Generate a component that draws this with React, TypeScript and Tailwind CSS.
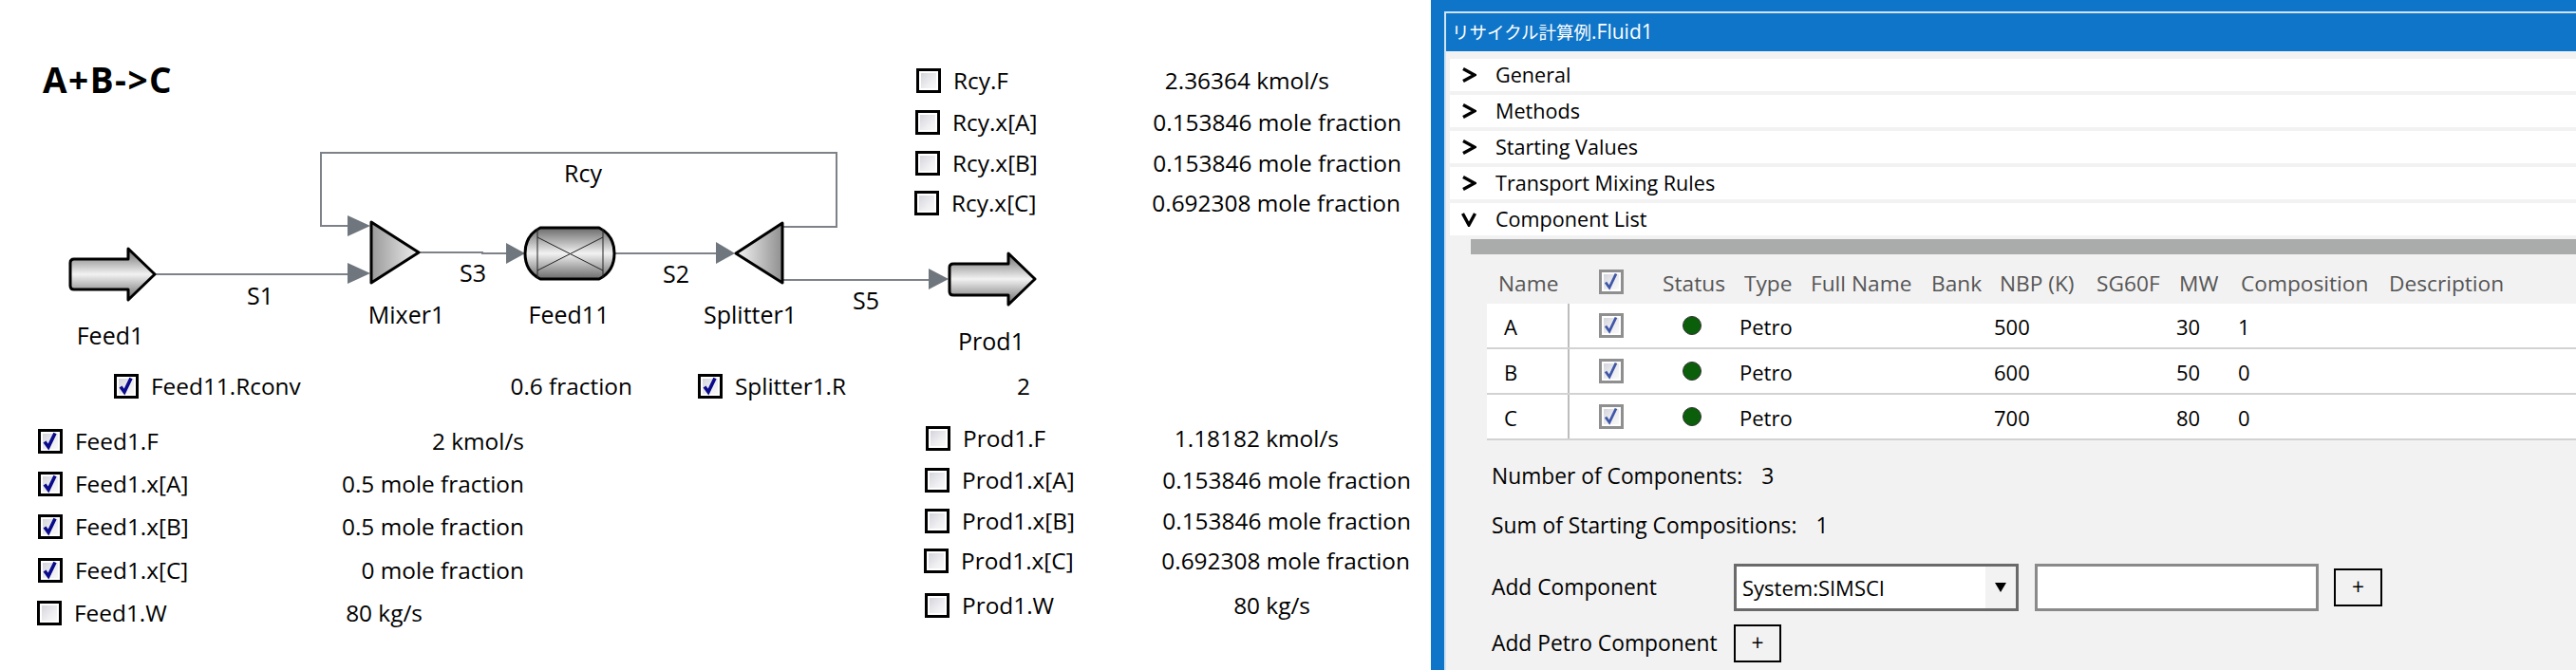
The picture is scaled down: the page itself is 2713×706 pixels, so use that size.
const FONT = "font-['Open_Sans','Noto_Sans','Noto_Sans_CJK_JP',sans-serif]";

function Check({ on, soft }: { on?: boolean; soft?: boolean }) {
  return (
    <svg width="26" height="26" viewBox="0 0 26 26" className="block shrink-0">
      <defs>
        <linearGradient id="cbFill" x1="0" y1="0" x2="1" y2="1">
          <stop offset="0" stopColor="#d4d5dc" />
          <stop offset="0.6" stopColor="#eeeef1" />
          <stop offset="1" stopColor="#f9f9fa" />
        </linearGradient>
      </defs>
      <rect x="1.5" y="1.5" width="23" height="23" fill="#fff" stroke={soft ? "#8f8f8f" : "#000"} strokeWidth="3" />
      <rect x="5" y="5" width="16" height="16" fill="url(#cbFill)" />
      {on && <path d="M7 13.5 L11 19 L18 4.5" fill="none" stroke={soft ? "#3f57a8" : "#0a0a8c"} strokeWidth={soft ? 2.8 : 3.6} />}
    </svg>
  );
}

function Var({ boxX, y, label, value, vx, on }: { boxX: number; y: number; label: string; value: string; vx: number; on?: boolean }) {
  return (
    <>
      <div className="absolute flex items-center h-[26px] -translate-y-1/2 whitespace-nowrap" style={{ left: boxX, top: y }}>
        <Check on={on} />
        <span className="ml-[13px] text-[24.4px] text-black">{label}</span>
      </div>
      <div className="absolute h-[26px] leading-[26px] -translate-y-1/2 -translate-x-full whitespace-nowrap text-[24.4px] text-black" style={{ left: vx, top: y }}>
        {value}
      </div>
    </>
  );
}

function Label({ x, y, t }: { x: number; y: number; t: string }) {
  return (
    <text x={x} y={y + 9} textAnchor="middle" fontSize="25" fill="#000">
      {t}
    </text>
  );
}

function Flowsheet() {
  const grey = "#7d8289";
  const head = "#6f767d";
  return (
    <svg width="1506" height="420" viewBox="0 0 1506 420" className="absolute left-0 top-0">
      <defs>
        <linearGradient id="vg" x1="0" y1="0" x2="0" y2="1">
          <stop offset="0" stopColor="#6a6a6a" />
          <stop offset="0.5" stopColor="#f2f2f2" />
          <stop offset="1" stopColor="#6a6a6a" />
        </linearGradient>
        <linearGradient id="hgR" x1="0" y1="0" x2="1" y2="0">
          <stop offset="0" stopColor="#999999" />
          <stop offset="1" stopColor="#efefef" />
        </linearGradient>
        <linearGradient id="hgL" x1="0" y1="0" x2="1" y2="0">
          <stop offset="0" stopColor="#f6f6f6" />
          <stop offset="1" stopColor="#8f8f8f" />
        </linearGradient>
      </defs>
      <g fill="none" stroke={grey} strokeWidth="2">
        <path d="M164 289H370" />
        <path d="M370 238H338V161H881V239H824" />
        <path d="M441 266H508V267H535" />
        <path d="M648 267H756" />
        <path d="M824 295H980" />
      </g>
      <g fill={head}>
        <path d="M366 277L390 288L366 299Z" />
        <path d="M366 227L390 238L366 249Z" />
        <path d="M533 256L553 267L533 278Z" />
        <path d="M754 255L774 267L754 278Z" />
        <path d="M978 283L999 294L978 305Z" />
      </g>
      <path d="M78 273H135V262L163 289L135 316V305H78Q74 305 74 301V277Q74 273 78 273Z" fill="url(#vg)" stroke="#000" strokeWidth="3" strokeLinejoin="round" />
      <path d="M1004 278H1062V267L1090 294L1062 321V311H1004Q1000 311 1000 307V282Q1000 278 1004 278Z" fill="url(#vg)" stroke="#000" strokeWidth="3" strokeLinejoin="round" />
      <path d="M391 234L441 266L391 298Z" fill="url(#hgR)" stroke="#000" strokeWidth="3" strokeLinejoin="round" />
      <path d="M824 235L775 267L824 298Z" fill="url(#hgL)" stroke="#000" strokeWidth="3" strokeLinejoin="round" />
      <path d="M569 240H631Q647 248 647 267Q647 286 631 294H569Q553 286 553 267Q553 248 569 240Z" fill="url(#vg)" stroke="#000" strokeWidth="3" strokeLinejoin="round" />
      <g fill="none" stroke="#222" strokeWidth="1">
        <path d="M566 241V293M635 241V293" />
        <path d="M566 250L635 285M635 250L566 285" />
      </g>
      <Label x={116} y={354} t="Feed1" />
      <Label x={274} y={312} t="S1" />
      <Label x={614} y={183} t="Rcy" />
      <Label x={428} y={332} t="Mixer1" />
      <Label x={498} y={288} t="S3" />
      <Label x={599} y={332} t="Feed11" />
      <Label x={712} y={289} t="S2" />
      <Label x={790} y={332} t="Splitter1" />
      <Label x={912} y={317} t="S5" />
      <Label x={1044} y={360} t="Prod1" />
    </svg>
  );
}

function Section({ title, open }: { title: string; open?: boolean }) {
  return (
    <div className="flex items-center h-[34px] bg-white pl-[12px]">
      <svg width="16" height="16" viewBox="0 0 16 16" className="shrink-0">
        {open ? <path d="M1.5 2L8 14L14.5 2" fill="none" stroke="#000" strokeWidth="3.4" /> : <path d="M2 1.5L14 8L2 14.5" fill="none" stroke="#000" strokeWidth="3.4" />}
      </svg>
      <span className="ml-[20px] pt-[1px] text-[21.6px] font-medium text-black">{title}</span>
    </div>
  );
}

const cols = "grid grid-cols-[118px_67px_86px_70px_127px_72px_102px_87px_65px_156px_1fr]";

function Row({ n, nbp, mw, comp }: { n: string; nbp: string; mw: string; comp: string }) {
  return (
    <div className={`${cols} h-[48px] items-center bg-white border-b-2 border-[#d2d2d2] text-[22px] text-black`}>
      <div className="h-full flex items-center pl-[18px] pt-[2px] border-r-2 border-[#bdbdbd] w-[87px]">{n}</div>
      <div><Check on soft /></div>
      <div className="pl-[21px]"><div className="w-[20px] h-[20px] rounded-full bg-[#0b5f0b] border border-[#333]" /></div>
      <div className="-ml-[5px] pt-[2px]">Petro</div>
      <div />
      <div />
      <div className="-ml-[6px] pt-[2px]">{nbp}</div>
      <div />
      <div className="-ml-[3px] pt-[2px]">{mw}</div>
      <div className="-ml-[3px] pt-[2px]">{comp}</div>
      <div />
    </div>
  );
}

export default function App() {
  return (
    <div className={`${FONT} flex w-[2713px] h-[706px] overflow-hidden`}>
      <div className="relative w-[1507px] h-full bg-white shrink-0">
        <div className="absolute left-[45px] top-[58px] text-[37px] tracking-[1.5px] font-bold leading-[52px] text-black">A+B-&gt;C</div>
        <Flowsheet />
        <Var boxX={120} y={407} label="Feed11.Rconv" value="0.6 fraction" vx={666} on />
        <Var boxX={735} y={407} label="Splitter1.R" value="2" vx={1085} on />
        <Var boxX={40} y={465} label="Feed1.F" value="2 kmol/s" vx={552} on />
        <Var boxX={40} y={510} label="Feed1.x[A]" value="0.5 mole fraction" vx={552} on />
        <Var boxX={40} y={555} label="Feed1.x[B]" value="0.5 mole fraction" vx={552} on />
        <Var boxX={40} y={601} label="Feed1.x[C]" value="0 mole fraction" vx={552} on />
        <Var boxX={39} y={646} label="Feed1.W" value="80 kg/s" vx={445} />
        <Var boxX={965} y={85} label="Rcy.F" value="2.36364 kmol/s" vx={1400} />
        <Var boxX={964} y={129} label="Rcy.x[A]" value="0.153846 mole fraction" vx={1476} />
        <Var boxX={964} y={172} label="Rcy.x[B]" value="0.153846 mole fraction" vx={1476} />
        <Var boxX={963} y={214} label="Rcy.x[C]" value="0.692308 mole fraction" vx={1475} />
        <Var boxX={975} y={462} label="Prod1.F" value="1.18182 kmol/s" vx={1410} />
        <Var boxX={974} y={506} label="Prod1.x[A]" value="0.153846 mole fraction" vx={1486} />
        <Var boxX={974} y={549} label="Prod1.x[B]" value="0.153846 mole fraction" vx={1486} />
        <Var boxX={973} y={591} label="Prod1.x[C]" value="0.692308 mole fraction" vx={1485} />
        <Var boxX={974} y={638} label="Prod1.W" value="80 kg/s" vx={1380} />
      </div>
      <div className="flex-1 min-w-0 bg-[#0f75c8] pl-[14px] pt-[12px]">
        <div className="h-full border-l-2 border-t-2 border-[#cfe3f3] bg-[#f2f2f2] flex flex-col">
          <div className="h-[40px] shrink-0 bg-[#0f75c8] flex items-center pl-[6px] text-white whitespace-nowrap">
            <span className="text-[18.5px]">リサイクル計算例</span>
            <span className="text-[21px]">.Fluid1</span>
          </div>
          <div className="flex flex-col gap-[4px] pl-[4px] pt-[8px]">
            <Section title="General" />
            <Section title="Methods" />
            <Section title="Starting Values" />
            <Section title="Transport Mixing Rules" />
            <Section title="Component List" open />
          </div>
          <div className="ml-[26px] mt-[4px] h-[16px] bg-[#aaacac] shrink-0" />
          <div className="pl-[43px]">
            <div className={`${cols} h-[52px] pt-[10px] items-center text-[22.7px] text-[#555] whitespace-nowrap`}>
              <div className="pl-[12px]">Name</div>
              <div className="-mt-[4px]"><Check on soft /></div>
              <div>Status</div>
              <div>Type</div>
              <div>Full Name</div>
              <div>Bank</div>
              <div>NBP (K)</div>
              <div>SG60F</div>
              <div>MW</div>
              <div>Composition</div>
              <div>Description</div>
            </div>
            <div>
              <Row n="A" nbp="500" mw="30" comp="1" />
              <Row n="B" nbp="600" mw="50" comp="0" />
              <Row n="C" nbp="700" mw="80" comp="0" />
            </div>
          </div>
          <div className="pl-[48px] text-[22.8px] text-black">
            <div className="flex h-[52px] items-center mt-[12px]"><span>Number of Components:</span><span className="ml-[20px]">3</span></div>
            <div className="flex h-[52px] items-center"><span>Sum of Starting Compositions:</span><span className="ml-[20px]">1</span></div>
            <div className="flex items-center h-[50px] mt-[14px]">
              <span className="w-[255px] shrink-0">Add Component</span>
              <div className="w-[300px] h-[50px] border-[3px] border-[#6a6a6a] bg-white flex items-center justify-between pl-[6px] text-[22px]">
                <span>System:SIMSCI</span>
                <div className="w-[32px] h-full bg-[#f2f2f2] flex items-center justify-center">
                  <svg width="12" height="10" viewBox="0 0 12 10"><path d="M0 0H12L6 10Z" fill="#000" /></svg>
                </div>
              </div>
              <div className="w-[299px] h-[50px] ml-[17px] border-[3px] border-[#8a8a8a] bg-white" />
              <div className="w-[51px] h-[40px] ml-[16px] border-2 border-black flex items-center justify-center">+</div>
            </div>
            <div className="flex items-center h-[40px] mt-[14px]">
              <span className="w-[255px] shrink-0">Add Petro Component</span>
              <div className="w-[50px] h-[40px] border-2 border-black flex items-center justify-center">+</div>
            </div>
          </div>
        </div>
      </div>
    </div>
  );
}
